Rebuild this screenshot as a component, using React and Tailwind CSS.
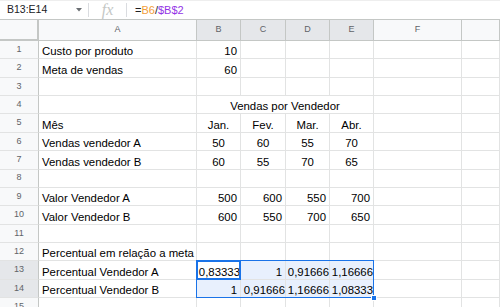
import React from "react";

const cols = ["A", "B", "C", "D", "E", "F", ""];

const rows = [
    { a: "Custo por produto", vals: ["10"], align: "right" },
    { a: "Meta de vendas", vals: ["60"], align: "right" },
    {},
    { merged: "Vendas por Vendedor" },
    { a: "Mês", vals: ["Jan.", "Fev.", "Mar.", "Abr."], align: "center" },
    { a: "Vendas vendedor A", vals: ["50", "60", "55", "70"], align: "center" },
    { a: "Vendas vendedor B", vals: ["60", "55", "70", "65"], align: "center" },
    {},
    { a: "Valor Vendedor A", vals: ["500", "600", "550", "700"], align: "right" },
    { a: "Valor Vendedor B", vals: ["600", "550", "700", "650"], align: "right" },
    {},
    { a: "Percentual em relação a meta" },
    { a: "Percentual Vendedor A", vals: ["0,83333", "1", "0,91666", "1,16666"], align: "right", sel: true },
    { a: "Percentual Vendedor B", vals: ["1", "0,91666", "1,16666", "1,08333"], align: "right", sel: true },
    {},
];

const cell =
    "flex items-end pb-[1px] border-r border-b border-[#e2e3e3] whitespace-nowrap leading-[12px] text-[11.4px] text-black";

function Cell({ children, align, className = "" }) {
    const long = typeof children === "string" && children.length >= 7 && align === "right";
    const a =
        align === "right"
            ? long
                ? "justify-end pr-0"
                : "justify-end pr-[3px]"
            : align === "center"
            ? "justify-center"
            : "justify-start pl-[3px]";
    return <div className={`${cell} ${a} ${className}`}>{children}</div>;
}

export default function App() {
    return (
        <div
            className="w-[500px] h-[307px] overflow-hidden bg-white"
            style={{ fontFamily: '"Liberation Sans", Arial, sans-serif' }}
        >
            {/* Formula bar */}
            <div className="flex items-center h-[20px] border-t border-[#eeeeee] border-b border-b-[#c4c7c5]">
                <div className="flex items-center justify-between w-[88px] pl-[7px] pr-[6px]">
                    <span className="text-[10.5px] text-[#202124]">B13:E14</span>
                    <svg width="6" height="4" viewBox="0 0 6 4">
                        <path d="M0 0 L6 0 L3 3.5 Z" fill="#6b6f73" />
                    </svg>
                </div>
                <div className="w-px h-[14px] bg-[#dadce0]" />
                <div
                    className="w-[37px] flex justify-center text-[16px] italic text-[#c4c7c5] leading-none"
                    style={{ fontFamily: '"Liberation Serif", serif' }}
                >
                    fx
                </div>
                <div className="w-px h-[14px] bg-[#dadce0]" />
                <div className="pl-[8px] text-[11px] text-[#202124]">
                    =<span className="text-[#f29d38]">B6</span>/<span className="text-[#9334e6]">$B$2</span>
                </div>
            </div>

            {/* Grid */}
            <div className="relative grid grid-cols-[39px_158px_44px_45px_44px_44px_88px_1fr] grid-rows-[21px_repeat(15,18.36px)]">
                {/* header row */}
                <div className="bg-[#f8f9fa] border-r-2 border-b-2 border-[#c4c7c5]" />
                {cols.map((c, i) => (
                    <div
                        key={c + i}
                        className={`flex items-center justify-center text-[9px] text-[#5f6368] border-r border-b border-[#c4c7c5] ${
                            i >= 1 && i <= 4 ? "bg-[#e5e7ea]" : "bg-[#f8f9fa]"
                        }`}
                    >
                        {c}
                    </div>
                ))}

                {rows.map((r, ri) => (
                    <React.Fragment key={ri}>
                        <div
                            className={`flex items-center justify-center text-[9px] text-[#5f6368] border-r border-b border-r-[#c4c7c5] border-b-[#e2e3e3] ${
                                r.sel ? "bg-[#e5e7ea]" : "bg-[#f8f9fa]"
                            }`}
                        >
                            {ri + 1}
                        </div>
                        <Cell>{r.a}</Cell>
                        {r.merged ? (
                            <Cell align="center" className="col-span-4">
                                {r.merged}
                            </Cell>
                        ) : (
                            [0, 1, 2, 3].map((k) => (
                                <Cell
                                    key={k}
                                    align={r.align}
                                    className={r.sel ? (ri === 12 && k === 0 ? "bg-white" : "bg-[#e8f0fd]") : ""}
                                >
                                    {r.vals ? r.vals[k] : ""}
                                </Cell>
                            ))
                        )}
                        <Cell />
                        <Cell />
                    </React.Fragment>
                ))}

                {/* selection range B13:E14 */}
                <div className="absolute inset-0 col-start-3 col-end-7 row-start-14 row-end-16 -top-px -left-px border border-[#1a73e8] pointer-events-none">
                    <div className="absolute -right-[4px] -bottom-[4px] w-[6px] h-[6px] bg-[#1a73e8] border border-white" />
                </div>
                {/* active cell B13 */}
                <div className="absolute inset-0 col-start-3 col-end-4 row-start-14 row-end-15 -top-px -left-px border-2 border-[#1a73e8] pointer-events-none" />
            </div>
        </div>
    );
}
